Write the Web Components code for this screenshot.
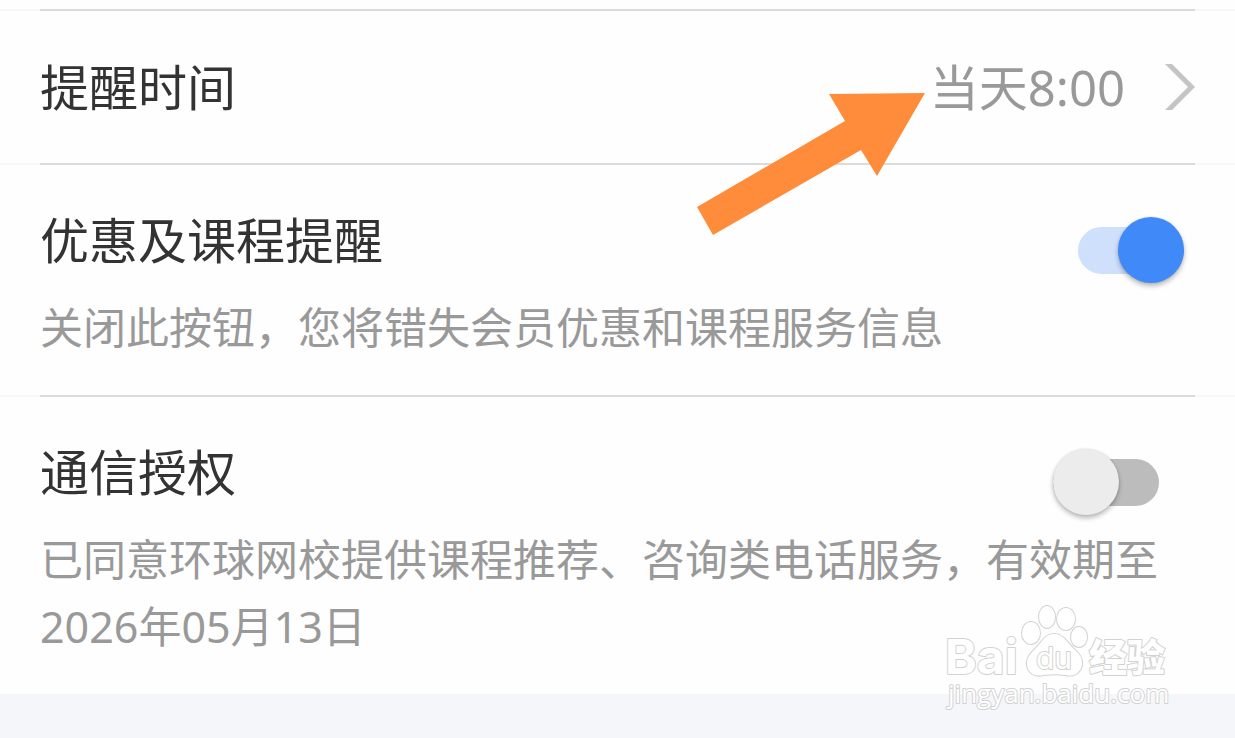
<!DOCTYPE html>
<html lang="zh-CN">
<head>
<meta charset="utf-8">
<meta name="viewport" content="width=device-width, initial-scale=1">
<title>提醒设置</title>
<style>
body { margin: 0; min-height: 100vh; background: #f5f6fa; font-family: "Noto Sans", "Noto Sans CJK SC", sans-serif; }
</style>
</head>
<body>
<settings-page>
  <time-row value="当天8:00">提醒时间</time-row>
  <switch-row label="优惠及课程提醒" checked>关闭此按钮，您将错失会员优惠和课程服务信息</switch-row>
  <switch-row label="通信授权" class="inset">已同意环球网校提供课程推荐、咨询类电话服务，有效期至2026年05月13日</switch-row>
  <pointer-arrow slot="overlay"></pointer-arrow>
  <site-watermark slot="overlay"></site-watermark>
</settings-page>

<script>
function define(name, html, setup) {
  const template = document.createElement('template');
  template.innerHTML = html;
  customElements.define(name, class extends HTMLElement {
    constructor() {
      super();
      this.attachShadow({ mode: 'open' }).append(template.content.cloneNode(true));
    }
    connectedCallback() { if (setup) setup(this, this.shadowRoot); }
  });
}

// Divider: strong between the side margins, barely visible outside them
const rule = `
  .rule { height: 2px; padding: 0 40px; background: #f8f8f8; }
  .rule::before { content: ""; display: block; height: 2px; background: #dbdbdb; }`;

define('settings-page', `
  <style>
    :host { display: block; position: relative; min-height: 100vh; }
    main { display: flex; flex-direction: column; padding-top: 9px; background: #fefefe; }
  </style>
  <main><slot></slot></main>
  <slot name="overlay"></slot>`);

define('time-row', `
  <style>
    :host { display: block; }
    ${rule}
    .row { display: flex; align-items: center; justify-content: space-between; padding: 40px; }
    h2 { margin: 0; font-size: 49px; font-weight: 400; line-height: 72px; color: #333; }
    button { display: flex; align-items: center; gap: 40px; margin: 0; padding: 0; border: 0;
      background: none; font: inherit; font-size: 49px; line-height: 72px; color: #999; cursor: pointer; }
    svg { display: block; width: 30px; height: 46px; }
  </style>
  <div class="rule"></div>
  <div class="row">
    <h2 id="name"><slot></slot></h2>
    <button type="button" aria-describedby="name"><span></span>
      <svg viewBox="0 0 30 46" aria-hidden="true"><path d="M0 0H7L30 23L7 46H0L23 23Z" fill="#c4c4c4"/></svg>
    </button>
  </div>`, (host, root) => {
  root.querySelector('span').textContent = host.getAttribute('value');
});

define('switch-row', `
  <style>
    :host { display: block; --inset: 11px; }
    :host(.inset) { --inset: 36px; }
    ${rule}
    .row { padding: 39px 40px 34px; }
    .head { display: flex; align-items: flex-start; justify-content: space-between; height: 90px; }
    label { font-size: 49px; line-height: 72px; color: #333; }
    .control { padding: 13px var(--inset) 0 0; }
    input { appearance: none; display: flex; align-items: center; position: relative;
      width: 106px; height: 66px; margin: 0; cursor: pointer; }
    input::before { content: ""; flex: 1; height: 47px; border-radius: 24px; background: #bcbcbc; }
    input::after { content: ""; position: absolute; left: 0; top: 0; width: 66px; height: 66px;
      border-radius: 50%; background: #ececec; box-shadow: 0 3px 5px rgba(0,0,0,.28), 0 0 2px rgba(0,0,0,.12); }
    input:checked::before { background: #cfe0fd; }
    input:checked::after { left: auto; right: 0; background: #4089f8; }
    p { margin: 0; font-size: 43px; line-height: 67px; color: #999; }
  </style>
  <div class="rule"></div>
  <div class="row">
    <div class="head">
      <label for="toggle"></label>
      <div class="control"><input id="toggle" type="checkbox" role="switch" aria-describedby="info"></div>
    </div>
    <p id="info"><slot></slot></p>
  </div>`, (host, root) => {
  root.querySelector('label').textContent = host.getAttribute('label');
  root.querySelector('input').checked = host.hasAttribute('checked');
});

define('pointer-arrow', `
  <style>
    :host { position: absolute; right: 310px; top: 92px; pointer-events: none; }
    svg { display: block; width: 229px; height: 144px; }
  </style>
  <svg viewBox="696 92 229 144" aria-hidden="true">
    <path d="M925 93L829 94L845 121L697 207L713 235L861 150L877 176Z" fill="#ff8c3a"/>
  </svg>`);

define('site-watermark', `
  <style>
    :host { position: absolute; right: 63px; top: 600px; pointer-events: none; }
    svg { display: block; width: 232px; height: 118px; overflow: visible; }
    g { fill: #fff; stroke: #d2d2d2; stroke-width: 2px; stroke-linejoin: round; paint-order: stroke; }
    .brand { font: 700 48px Inter, sans-serif; }
    .du { font: 400 30px Inter, sans-serif; }
    .cjk { font: 900 38px "Noto Sans CJK SC", sans-serif; }
    .site { font: 400 26px "Open Sans", sans-serif; }
  </style>
  <svg viewBox="940 600 232 118" role="img" aria-label="Baidu 经验">
    <g>
      <text class="brand" x="945" y="674">Bai</text>
      <ellipse cx="1031" cy="633" rx="9" ry="11"/>
      <ellipse cx="1047" cy="617" rx="8" ry="11"/>
      <ellipse cx="1066" cy="619" rx="9" ry="11"/>
      <ellipse cx="1079" cy="637" rx="8" ry="10"/>
      <path d="M1054 634C1063 634 1067 642 1073 648C1079 653 1083 658 1082 665C1080 674 1073 677 1065 675C1058 674 1051 674 1044 675C1036 677 1028 674 1027 665C1026 658 1031 653 1036 648C1042 642 1045 634 1054 634Z"/>
      <text class="du" x="1036" y="669">du</text>
      <text class="cjk" x="1089" y="671">经验</text>
      <text class="site" x="948" y="703">jingyan.baidu.com</text>
    </g>
  </svg>`);
</script>
</body>
</html>
